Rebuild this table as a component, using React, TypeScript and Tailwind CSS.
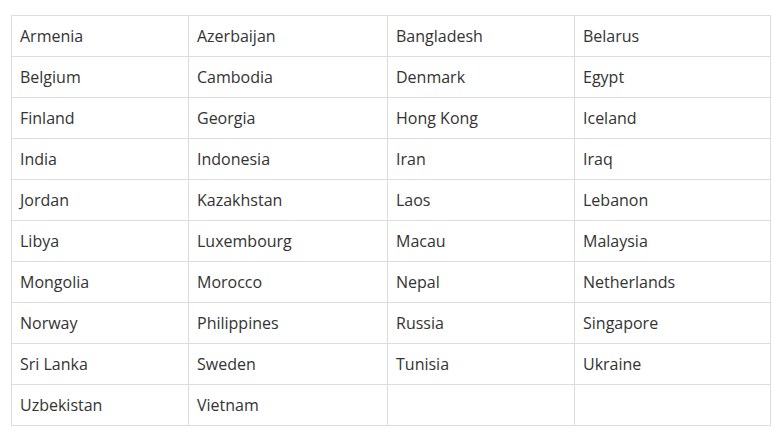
import React from "react";

const countries = [
  "Armenia", "Azerbaijan", "Bangladesh", "Belarus",
  "Belgium", "Cambodia", "Denmark", "Egypt",
  "Finland", "Georgia", "Hong Kong", "Iceland",
  "India", "Indonesia", "Iran", "Iraq",
  "Jordan", "Kazakhstan", "Laos", "Lebanon",
  "Libya", "Luxembourg", "Macau", "Malaysia",
  "Mongolia", "Morocco", "Nepal", "Netherlands",
  "Norway", "Philippines", "Russia", "Singapore",
  "Sri Lanka", "Sweden", "Tunisia", "Ukraine",
  "Uzbekistan", "Vietnam", "", "",
];

export default function App() {
  return (
    <div className="w-[781px] h-[432px] bg-white pl-[11px] pt-[15px]" style={{ fontFamily: '"Open Sans", sans-serif' }}>
      <div className="grid grid-cols-[176px_198px_186px_195px] auto-rows-[40px] gap-px p-px bg-[#dddddd] w-[760px]">
        {countries.map((c, i) => (
          <div key={i} className="bg-white px-[8px] flex items-center text-[16px] leading-[24px] text-[#333333]">
            {c}
          </div>
        ))}
      </div>
    </div>
  );
}
